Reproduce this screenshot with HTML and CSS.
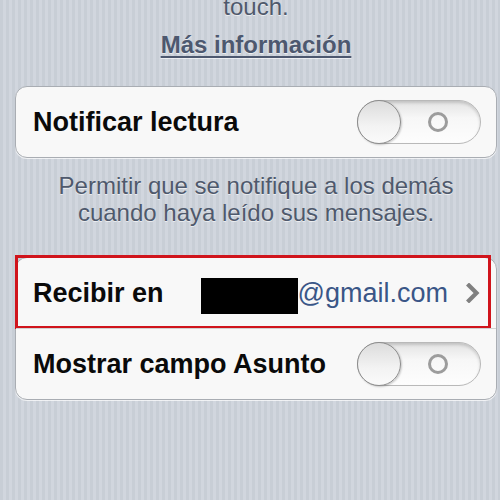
FILE: index.html
```html
<!DOCTYPE html>
<html lang="es">
<head>
<meta charset="utf-8">
<title>Ajustes de correo</title>
<link rel="stylesheet" href="styles.css">
</head>
<body>
<div class="page">
  <p class="note note-top">touch.</p>
  <p class="more-wrap"><a class="more" href="#">Más información</a></p>

  <div class="group">
    <div class="row">
      <span class="label">Notificar lectura</span>
      <span class="switch"><span class="knob"></span><span class="off-mark"></span></span>
    </div>
  </div>

  <p class="note note-desc">Permitir que se notifique a los demás<br>cuando haya leído sus mensajes.</p>

  <div class="group">
    <div class="row row-marked">
      <span class="label">Recibir en</span>
      <span class="value"><span class="redacted"></span>@gmail.com</span>
      <svg class="chevron" width="14" height="20" viewBox="0 0 14 20"><path d="M3 2.5 L10.5 10 L3 17.5" fill="none" stroke="#808080" stroke-width="4.2" stroke-linecap="square" stroke-linejoin="miter"/></svg>
    </div>
    <div class="row">
      <span class="label">Mostrar campo Asunto</span>
      <span class="switch"><span class="knob"></span><span class="off-mark"></span></span>
    </div>
  </div>
</div>
</body>
</html>
```
FILE: styles.css
```css
html, body {
  margin: 0;
  height: 100%;
}

body {
  font-family: "Liberation Sans", Arial, sans-serif;
  background-color: #cdd2da;
  background-image: repeating-linear-gradient(90deg, #c8ced6 0 3px, #d1d6de 3px 6px);
  overflow: hidden;
}

.page {
  padding: 0 3px 0 15px;
}

.note {
  margin: 0;
  text-align: center;
  font-size: 24px;
  line-height: 28px;
  color: #4f596c;
  text-shadow: 0 1px 0 rgba(255, 255, 255, 0.6);
}

.note-top {
  margin-top: -7px;
}

.note-desc {
  line-height: 27px;
}

.more-wrap {
  margin: 10px 0 0;
  text-align: center;
  font-size: 24px;
  line-height: 28px;
}

.more {
  color: #4d586f;
  font-weight: bold;
  text-decoration: underline;
  text-decoration-thickness: 2px;
  text-underline-offset: 3px;
  text-shadow: 0 1px 0 rgba(255, 255, 255, 0.6);
}

.group {
  margin-top: 27px;
  background: #f8f8f8;
  border: 1px solid #a9adb3;
  border-radius: 12px;
  box-shadow: 0 1px 0 rgba(255, 255, 255, 0.7);
}

.group + .note {
  margin-top: 14px;
}

.note + .group {
  margin-top: 31px;
}

.row {
  position: relative;
  display: flex;
  align-items: center;
  height: 70px;
  padding: 0 15px 0 17px;
}

.row + .row {
  border-top: 1px solid #d2d2d2;
}

.label {
  font-size: 27px;
  font-weight: bold;
  color: #0a0a0a;
  flex: 1;
  white-space: nowrap;
}

.value {
  display: flex;
  align-items: center;
  font-size: 27px;
  color: #3a5687;
  margin-right: 18px;
  white-space: nowrap;
}

.redacted {
  display: inline-block;
  width: 97px;
  height: 36px;
  background: #000;
  margin-top: 6px;
}

.chevron {
  display: block;
  margin-right: 1px;
}

.row-marked::after {
  content: "";
  position: absolute;
  left: -1px;
  top: -3px;
  right: 5px;
  bottom: -1px;
  border: 3px solid #d0141c;
  pointer-events: none;
}

.switch {
  position: relative;
  width: 124px;
  height: 44px;
  flex: none;
  border-radius: 22px;
  box-sizing: border-box;
  border: 1px solid #b9b9b9;
  background: linear-gradient(#e3e3e3, #f7f7f7 40%, #fdfdfd);
  box-shadow: inset 0 2px 3px rgba(0, 0, 0, 0.15);
}

.knob {
  position: absolute;
  left: -1px;
  top: -1px;
  width: 44px;
  height: 44px;
  border-radius: 50%;
  box-sizing: border-box;
  border: 1px solid #8c8c8c;
  background: linear-gradient(#dcdcdc, #f3f3f3 60%, #fafafa);
  box-shadow: 1px 1px 2px rgba(0, 0, 0, 0.2);
}

.off-mark {
  position: absolute;
  left: 70px;
  top: 11px;
  width: 20px;
  height: 20px;
  box-sizing: border-box;
  border-radius: 50%;
  border: 3px solid #9c9c9c;
}
```
